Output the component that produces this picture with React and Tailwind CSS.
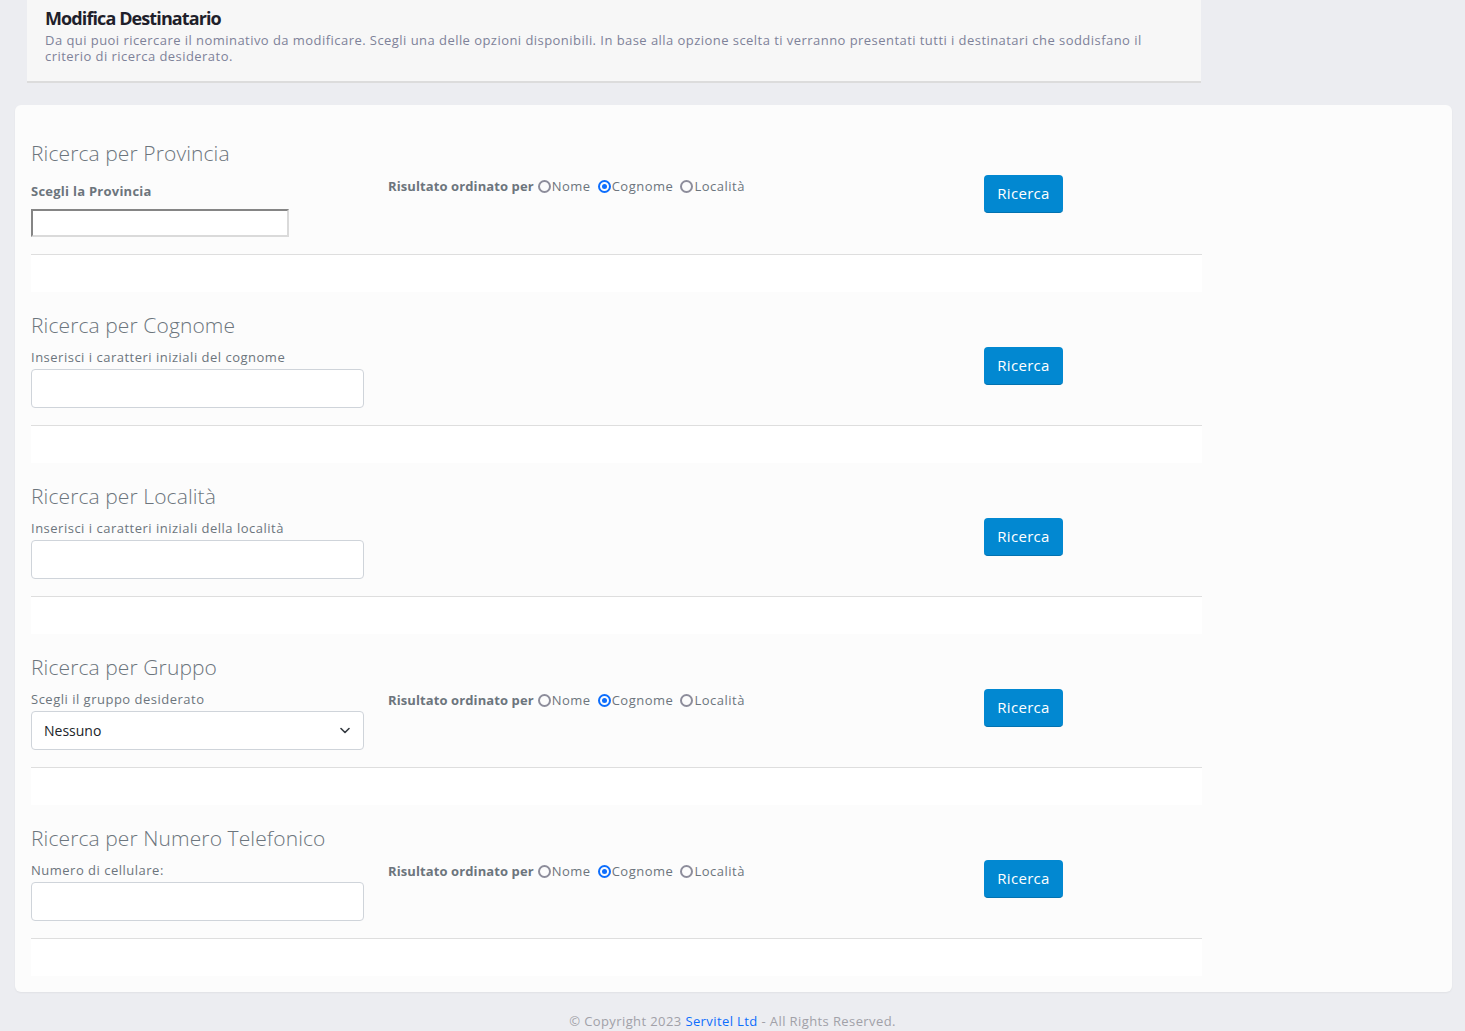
import { useState } from 'react';

const font = { fontFamily: '"Open Sans", "Liberation Sans", sans-serif' };

const Radio = ({ checked, label, onClick }) => (
  <label className="flex items-center cursor-pointer" onClick={onClick}>
    <span
      className={`w-[13px] h-[13px] rounded-full border-2 flex items-center justify-center ${
        checked ? 'border-[#0d6efd]' : 'border-[#8d8d9b]'
      }`}
    >
      {checked && <span className="w-[5px] h-[5px] rounded-full bg-[#0d6efd]" />}
    </span>
    <span className="ml-px text-[13px] text-[#6c757d] tracking-[0.5px]">{label}</span>
  </label>
);

const OrderBy = () => {
  const [order, setOrder] = useState('Cognome');
  return (
    <div className="flex items-center gap-[4px] pt-[36px] leading-[20px]">
      <span className="text-[13px] font-bold text-[#6c757d] tracking-[0.1px]">Risultato ordinato per</span>
      <div className="flex items-center gap-[7px]">
        {['Nome', 'Cognome', 'Località'].map(o => (
          <Radio key={o} label={o} checked={order === o} onClick={() => setOrder(o)} />
        ))}
      </div>
    </div>
  );
};

const Button = () => (
  <button className="w-[79px] h-[38px] rounded-[4px] bg-[#0288d1] text-white text-[15px] tracking-[0.3px] border-b border-[#0272b0]">
    Ricerca
  </button>
);

const Section = ({ title, children, middle }) => (
  <div>
    <div className="flex pt-[20px] pb-[17px]">
      <div className="w-[333px]">
        <h3 className="text-[21px] font-light text-[#6c757d] leading-[26px] tracking-[0.1px]">{title}</h3>
        {children}
      </div>
      <div className="ml-[24px] w-[572px]">{middle}</div>
      <div className="ml-[24px] pt-[35px]">
        <Button />
      </div>
    </div>
    <div className="border-t border-[#dedede] h-[38px] bg-white" />
  </div>
);

const labelCls = 'block mt-[9px] text-[13px] leading-[20px] tracking-[0.5px]';
const inputCls = 'block w-[333px] h-[39px] border border-[#cfd4da] rounded-[4px] bg-white px-3 text-[14px] outline-none';

export default function App() {
  return (
    <div className="min-h-[1031px] bg-[#ecedf1] text-[#6c757d]" style={font}>
      <div className="ml-[27px] w-[1174px] bg-[#f7f7f7] border-b-2 border-[#dcdcdc] px-[18px] pt-[6px] pb-[17px]">
        <h1 className="text-[18px] font-bold text-[#1f1f2b] tracking-[-0.9px] leading-[24px]">Modifica Destinatario</h1>
        <p className="mt-[2px] pr-[40px] text-[13px] leading-[16px] text-[#7e8299] tracking-[0.45px]">
          Da qui puoi ricercare il nominativo da modificare. Scegli una delle opzioni disponibili. In base alla opzione scelta ti verranno presentati tutti i destinatari che soddisfano il criterio di ricerca desiderato.
        </p>
      </div>

      <div className="ml-[15px] mr-[13px] mt-[22px] bg-[#fcfcfc] rounded-[6px] shadow-[0_1px_2px_rgba(0,0,0,0.05)] pt-[15px] pb-[16px] pl-[16px]">
        <div className="w-[1171px]">
          <Section title="Ricerca per Provincia" middle={<OrderBy />}>
            <label className="block mt-[15px] text-[13px] font-bold text-[#6c757d] leading-[20px] tracking-[0.25px]">Scegli la Provincia</label>
            <input className="block mt-[8px] w-[258px] h-[28px] border-2 border-t-[#858585] border-l-[#858585] border-r-[#dadada] border-b-[#dadada] bg-white outline-none" />
          </Section>

          <Section title="Ricerca per Cognome">
            <label className={labelCls}>Inserisci i caratteri iniziali del cognome</label>
            <input className={`${inputCls} mt-[2px]`} />
          </Section>

          <Section title="Ricerca per Località">
            <label className={labelCls}>Inserisci i caratteri iniziali della località</label>
            <input className={`${inputCls} mt-[2px]`} />
          </Section>

          <Section title="Ricerca per Gruppo" middle={<OrderBy />}>
            <label className={labelCls}>Scegli il gruppo desiderato</label>
            <div className="relative mt-[2px]">
              <select className={`${inputCls} appearance-none text-[#212529]`} defaultValue="Nessuno">
                <option>Nessuno</option>
              </select>
              <svg className="absolute right-[14px] top-[16px] pointer-events-none" width="10" height="7" viewBox="0 0 10 7" fill="none">
                <path d="M1 1.5l4 4 4-4" stroke="#343a40" strokeWidth="1.6" strokeLinecap="round" strokeLinejoin="round" />
              </svg>
            </div>
          </Section>

          <Section title="Ricerca per Numero Telefonico" middle={<OrderBy />}>
            <label className={labelCls}>Numero di cellulare:</label>
            <input className={`${inputCls} mt-[2px]`} />
          </Section>
        </div>
      </div>

      <div className="pt-[20px] pb-[2px] text-center text-[13px] text-[#a1a1a8] tracking-[0.4px]">
        © Copyright 2023 <span className="text-[#0d6efd]">Servitel Ltd</span> - All Rights Reserved.
      </div>
    </div>
  );
}
